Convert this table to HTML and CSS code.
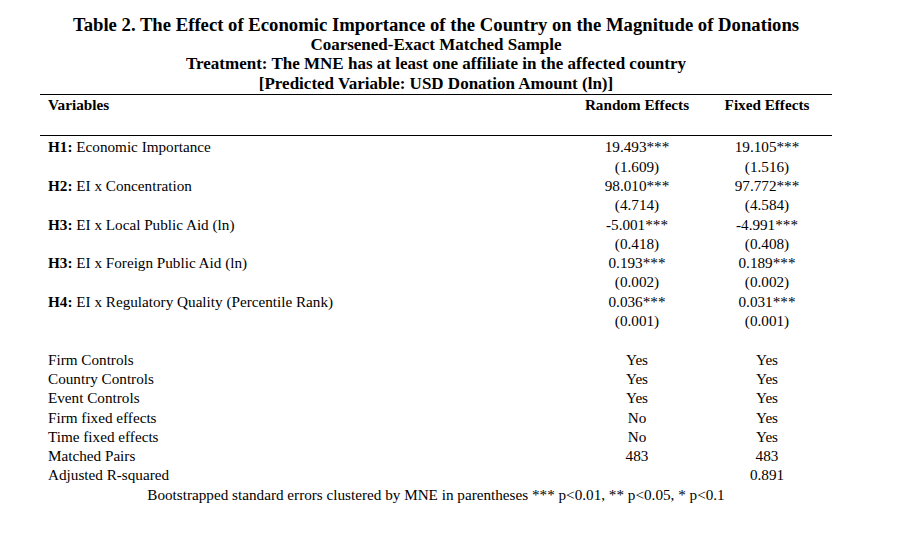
FILE: index.html
```html
<!DOCTYPE html>
<html>
<head>
<meta charset="utf-8">
<link rel="stylesheet" href="styles.css">
</head>
<body>
<div class="page">
  <div class="caption">
    <div class="title">Table 2. The Effect of Economic Importance of the Country on the Magnitude of Donations</div>
    <div class="sub">Coarsened-Exact Matched Sample</div>
    <div class="sub">Treatment: The MNE has at least one affiliate in the affected country</div>
    <div class="sub">[Predicted Variable: USD Donation Amount (ln)]</div>
  </div>
  <table class="results">
    <thead>
      <tr class="head">
        <th class="label">Variables</th>
        <th class="col">Random Effects</th>
        <th class="col">Fixed Effects</th>
      </tr>
    </thead>
    <tbody>
      <tr class="first"><td class="label"><b>H1:</b> Economic Importance</td><td class="col">19.493***</td><td class="col">19.105***</td></tr>
      <tr><td class="label"></td><td class="col">(1.609)</td><td class="col">(1.516)</td></tr>
      <tr><td class="label"><b>H2:</b> EI x Concentration</td><td class="col">98.010***</td><td class="col">97.772***</td></tr>
      <tr><td class="label"></td><td class="col">(4.714)</td><td class="col">(4.584)</td></tr>
      <tr><td class="label"><b>H3:</b> EI x Local Public Aid (ln)</td><td class="col">-5.001***</td><td class="col">-4.991***</td></tr>
      <tr><td class="label"></td><td class="col">(0.418)</td><td class="col">(0.408)</td></tr>
      <tr><td class="label"><b>H3:</b> EI x Foreign Public Aid (ln)</td><td class="col">0.193***</td><td class="col">0.189***</td></tr>
      <tr><td class="label"></td><td class="col">(0.002)</td><td class="col">(0.002)</td></tr>
      <tr><td class="label"><b>H4:</b> EI x Regulatory Quality (Percentile Rank)</td><td class="col">0.036***</td><td class="col">0.031***</td></tr>
      <tr><td class="label"></td><td class="col">(0.001)</td><td class="col">(0.001)</td></tr>
      <tr><td class="label">&nbsp;</td><td class="col"></td><td class="col"></td></tr>
      <tr><td class="label">Firm Controls</td><td class="col">Yes</td><td class="col">Yes</td></tr>
      <tr><td class="label">Country Controls</td><td class="col">Yes</td><td class="col">Yes</td></tr>
      <tr><td class="label">Event Controls</td><td class="col">Yes</td><td class="col">Yes</td></tr>
      <tr><td class="label">Firm fixed effects</td><td class="col">No</td><td class="col">Yes</td></tr>
      <tr><td class="label">Time fixed effects</td><td class="col">No</td><td class="col">Yes</td></tr>
      <tr><td class="label">Matched Pairs</td><td class="col">483</td><td class="col">483</td></tr>
      <tr><td class="label">Adjusted R-squared</td><td class="col"></td><td class="col">0.891</td></tr>
      <tr><td class="note" colspan="3">Bootstrapped standard errors clustered by MNE in parentheses *** p&lt;0.01, ** p&lt;0.05, * p&lt;0.1</td></tr>
    </tbody>
  </table>
</div>
</body>
</html>
```

FILE: styles.css
```css
html, body {
  margin: 0;
  padding: 0;
  background: #ffffff;
}

body {
  font-family: "Liberation Serif", "Times New Roman", serif;
  color: #000000;
}

.page {
  width: 792px;
  margin-left: 40px;
  padding-top: 14.5px;
}

.caption {
  text-align: center;
  font-weight: bold;
}

.title {
  font-size: 18.7px;
  line-height: 20px;
}

.sub {
  font-size: 17px;
  line-height: 19.8px;
}

.results {
  width: 792px;
  border-collapse: collapse;
  font-size: 15.2px;
  border-top: 1px solid #000;
}

.results th,
.results td {
  padding: 0;
  line-height: 19.3px;
}

.results .head th {
  height: 40px;
  vertical-align: top;
  font-weight: bold;
  border-bottom: 1px solid #000;
}

.results .label {
  text-align: left;
  padding-left: 8px;
}

.results .col {
  width: 130px;
  text-align: center;
}

.results tr.first td {
  padding-top: 1.5px;
}

.results .note {
  text-align: center;
}
```
